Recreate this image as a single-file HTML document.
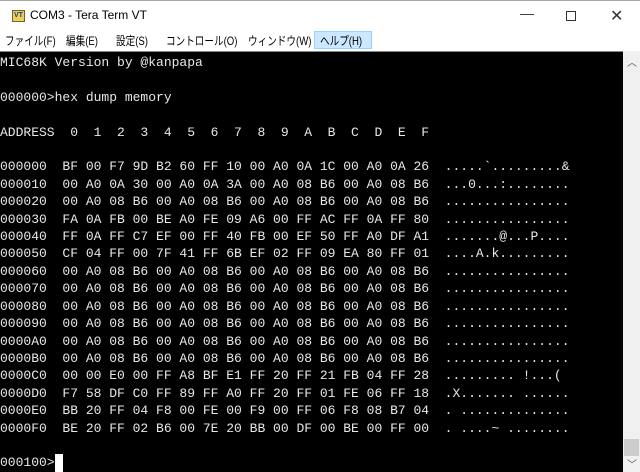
<!DOCTYPE html>
<html><head><meta charset="utf-8"><style>
*{margin:0;padding:0;box-sizing:border-box}
body{width:640px;height:472px;overflow:hidden;background:#fff;position:relative;font-family:"Liberation Sans","Noto Sans CJK JP",sans-serif}
#title{position:absolute;left:0;top:0;width:640px;height:31px;background:#fff;border-top:1px solid #aaa}
#title .t{position:absolute;left:30px;top:7px;font-size:12px;color:#000}
#icon{position:absolute;left:12px;top:9px;width:13px;height:12px;background:#e8d060;border:1px solid #806020;font-size:7px;font-weight:bold;color:#204080;line-height:10px;text-align:center}
.ctl{position:absolute;top:8px;font-size:14px;color:#333}
#menu{position:absolute;left:0;top:31px;width:640px;height:19px;font-size:12px;color:#000}
#menu span{position:absolute;top:1px;transform:scaleX(0.8);transform-origin:left center;white-space:nowrap}
#help{position:absolute;left:314px;top:0;width:58px;height:18px;background:#cce8ff;border:1px solid #99d1ff}
#term{position:absolute;left:0;top:51px;width:623px;height:421px;background:#000;border-top:1px solid #888}
#txt{position:absolute;left:0;top:2px;font-family:"Liberation Mono",monospace;font-size:13px;line-height:17.4px;color:#e8e8e8;white-space:pre;letter-spacing:0}
#cur{position:absolute;left:55px;top:402px;width:8px;height:18px;background:#fff}
#sb{position:absolute;left:623px;top:51px;width:17px;height:421px;background:#f0f0f0}
#thumb{position:absolute;left:1px;top:388px;width:15px;height:17px;background:#cdcdcd}
.ar{position:absolute;left:4px;font-size:10px;color:#555}
</style></head><body>
<div id="title"><div id="icon">VT</div><div class="t">COM3 - Tera Term VT</div>
<div class="ctl" style="left:520px;top:4px">—</div>
<div style="position:absolute;left:566px;top:10px;width:10px;height:10px;border:1px solid #333"></div>
<div class="ctl" style="left:610px;top:5px;font-size:16px">✕</div></div>
<div id="menu"><div id="help"></div>
<span style="left:5px">ファイル(F)</span><span style="left:66px">編集(E)</span><span style="left:116px">設定(S)</span><span style="left:166px">コントロール(O)</span><span style="left:248px">ウィンドウ(W)</span><span style="left:320px">ヘルプ(H)</span></div>
<div id="term"><div id="txt">MIC68K Version by @kanpapa

000000&gt;hex dump memory

ADDRESS  0  1  2  3  4  5  6  7  8  9  A  B  C  D  E  F

000000  BF 00 F7 9D B2 60 FF 10 00 A0 0A 1C 00 A0 0A 26  .....`.........&amp;
000010  00 A0 0A 30 00 A0 0A 3A 00 A0 08 B6 00 A0 08 B6  ...0...:........
000020  00 A0 08 B6 00 A0 08 B6 00 A0 08 B6 00 A0 08 B6  ................
000030  FA 0A FB 00 BE A0 FE 09 A6 00 FF AC FF 0A FF 80  ................
000040  FF 0A FF C7 EF 00 FF 40 FB 00 EF 50 FF A0 DF A1  .......@...P....
000050  CF 04 FF 00 7F 41 FF 6B EF 02 FF 09 EA 80 FF 01  ....A.k.........
000060  00 A0 08 B6 00 A0 08 B6 00 A0 08 B6 00 A0 08 B6  ................
000070  00 A0 08 B6 00 A0 08 B6 00 A0 08 B6 00 A0 08 B6  ................
000080  00 A0 08 B6 00 A0 08 B6 00 A0 08 B6 00 A0 08 B6  ................
000090  00 A0 08 B6 00 A0 08 B6 00 A0 08 B6 00 A0 08 B6  ................
0000A0  00 A0 08 B6 00 A0 08 B6 00 A0 08 B6 00 A0 08 B6  ................
0000B0  00 A0 08 B6 00 A0 08 B6 00 A0 08 B6 00 A0 08 B6  ................
0000C0  00 00 E0 00 FF A8 BF E1 FF 20 FF 21 FB 04 FF 28  ......... !...(
0000D0  F7 58 DF C0 FF 89 FF A0 FF 20 FF 01 FE 06 FF 18  .X....... ......
0000E0  BB 20 FF 04 F8 00 FE 00 F9 00 FF 06 F8 08 B7 04  . ..............
0000F0  BE 20 FF 02 B6 00 7E 20 BB 00 DF 00 BE 00 FF 00  . ....~ ........

000100&gt;</div><div id="cur"></div></div>
<div id="sb"><div class="ar" style="top:3px">︿</div><div id="thumb"></div><div class="ar" style="top:405px">﹀</div></div>
</body></html>
